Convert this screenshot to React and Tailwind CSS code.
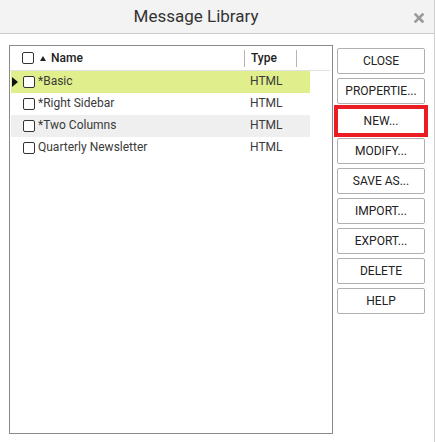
import React from "react";

const Check = () => (
  <span className="inline-block w-[12px] h-[12px] border border-[#333] rounded-[2px] bg-white shrink-0" />
);

const rows = [
  { name: "*Basic", type: "HTML", bg: "bg-[#e0ef8c]", current: true },
  { name: "*Right Sidebar", type: "HTML", bg: "bg-white" },
  { name: "*Two Columns", type: "HTML", bg: "bg-[#efefef]" },
  { name: "Quarterly Newsletter", type: "HTML", bg: "bg-white" },
];

const buttons = ["CLOSE", "PROPERTIE...", "NEW...", "MODIFY...", "SAVE AS...", "IMPORT...", "EXPORT...", "DELETE", "HELP"];

export default function App() {
  return (
    <div className="w-[435px] h-[442px] bg-white border-r border-[#cfcfcf] flex flex-col font-['Roboto',sans-serif] text-[#333]">
      <div className="h-[34px] shrink-0 bg-[#f3f3f3] border-b border-[#cccccc] flex items-center relative">
        <div className="flex-1 text-center text-[17px] text-[#333] pr-[42px]">Message Library</div>
        <svg className="absolute right-[10px] top-[13px]" width="10" height="10" viewBox="0 0 10 10">
          <path d="M1.5 1.5L8.5 8.5M8.5 1.5L1.5 8.5" stroke="#9a9a9a" strokeWidth="2.6" strokeLinecap="square" />
        </svg>
      </div>
      <div className="flex pt-[11px] pl-[9px]">
        <div className="w-[324px] h-[389px] border border-[#8a8a8a] flex flex-col">
          <div className="h-[24px] flex items-center text-[12px] text-[#222] font-medium">
            <div className="w-[12px]" />
            <Check />
            <svg className="ml-[6px] mt-[1px]" width="6" height="5" viewBox="0 0 6 5">
              <path d="M0 5L3 0L6 5Z" fill="#222" />
            </svg>
            <span className="ml-[5px] w-[193px]">Name</span>
            <div className="w-px h-[17px] bg-[#b5b5b5]" />
            <span className="ml-[6px] w-[45px]">Type</span>
            <div className="w-px h-[17px] bg-[#b5b5b5]" />
          </div>
          <div className="h-px bg-[#e2e2e2] mr-[2px]" />
          <div className="flex flex-col pl-[1px] w-[300px]">
            {rows.map((r) => (
              <div key={r.name} className={`h-[22px] flex items-center text-[12px] text-[#3a3a3a] ${r.bg}`}>
                <div className="w-[12px] flex items-center justify-start pl-[1px]">
                  {r.current && (
                    <svg width="6" height="10" viewBox="0 0 6 10">
                      <path d="M0 0L6 5L0 10Z" fill="#111" />
                    </svg>
                  )}
                </div>
                <Check />
                <span className="ml-[3px] w-[212px] -mt-[2px]">{r.name}</span>
                <span className="w-[52px] -mt-[2px]">{r.type}</span>
              </div>
            ))}
          </div>
        </div>
        <div className="ml-[4px] pt-[3px] flex flex-col gap-[4px]">
          {buttons.map((b) => (
            <div
              key={b}
              className={`w-[88px] h-[26px] border bg-white flex items-center justify-center text-[12px] text-[#222] ${
                b === "NEW..."
                  ? "border-[#ec1c24] outline-[4px] outline-solid outline-[#ec1c24] -outline-offset-1"
                  : "border-[#b0b0b0] rounded-[2px]"
              }`}
            >
              {b}
            </div>
          ))}
        </div>
      </div>
    </div>
  );
}
